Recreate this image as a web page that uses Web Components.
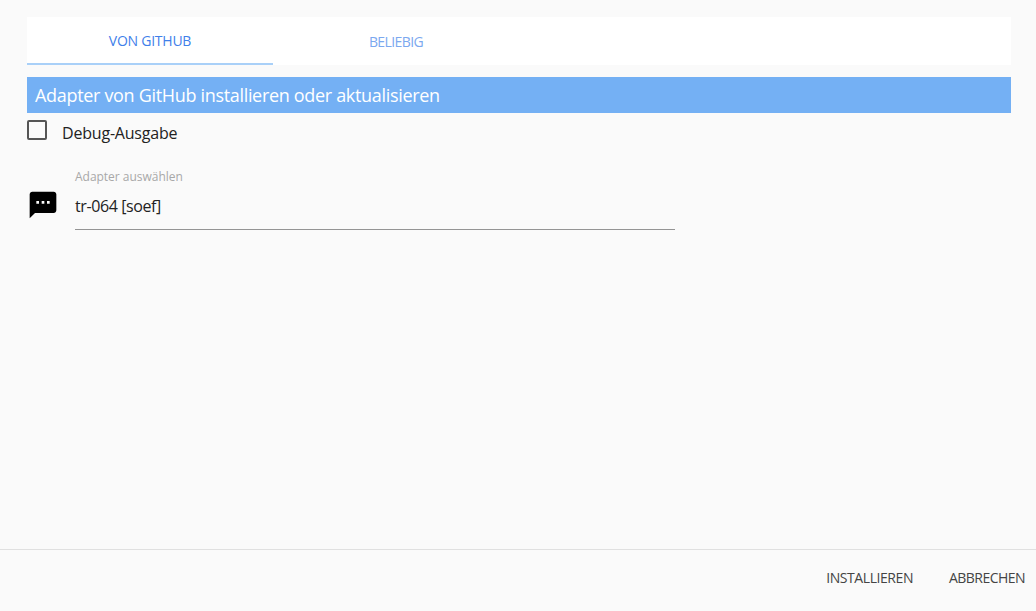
<!DOCTYPE html>
<html><head><meta charset="utf-8"><style>
html,body{margin:0;padding:0;height:100%;background:#fafafa;font-family:"Open Sans","Noto Sans",sans-serif;overflow:hidden}
</style></head><body>
<install-dialog></install-dialog>
<script>
function def(name, html){
  customElements.define(name, class extends HTMLElement{
    constructor(){super();this.attachShadow({mode:'open'}).innerHTML=html;}
  });
}
def('tab-bar',`<style>:host{display:flex;height:48px;background:#fff}
.t{width:246px;box-sizing:border-box;display:flex;align-items:center;justify-content:center;font-size:14px;color:#3f80ea;height:48px}
.a{border-bottom:2px solid #a9d0f8;letter-spacing:-.25px;padding-top:1px}
.b{color:#7ba8ef;letter-spacing:-.6px;padding-bottom:1px;padding-top:1px}</style>
<div class="t a">VON GITHUB</div><div class="t b">BELIEBIG</div>`);
def('section-title',`<style>:host{display:block;height:36px;line-height:37px;margin-top:12px;background:#74b0f4;color:#fff;font-size:18px;letter-spacing:-.32px;padding-left:8px}</style><slot></slot>`);
def('check-row',`<style>:host{display:flex;height:20px;margin-top:7px;align-items:flex-start}
.b{width:20px;height:20px;box-sizing:border-box;border:2px solid #555;border-radius:2px;flex:none}
.l{margin:3px 0 0 15px;font-size:16px;line-height:20px;letter-spacing:-.2px;color:#222}</style>
<div class="b"></div><div class="l"><slot></slot></div>`);
def('adapter-select',`<style>:host{display:flex;margin-top:29px}
svg{width:32px;height:32px;margin:20px 0 0 0;flex:none}
.f{width:600px;margin-left:16px;height:60px;border-bottom:1px solid #949494}
.c{font-size:12px;line-height:16px;letter-spacing:-.02px;color:#a8a8a8}
.v{font-size:16px;line-height:20px;margin-top:11px;letter-spacing:-.4px;color:#222}</style>
<svg viewBox="0 0 24 24"><path d="M20 2H4c-1.100 0-2 .9-2 2v18l4-4h14c1.100 0 2-.9 2-2V4c0-1.100-.9-2-2-2zM9 11H7V9h2v2zm4 0h-2V9h2v2zm4 0h-2V9h2v2z"/></svg>
<div class="f"><div class="c">Adapter auswählen</div><div class="v">tr-064 [soef]</div></div>`);
def('action-bar',`<style>:host{position:absolute;left:0;right:0;top:549px;height:62px;box-sizing:border-box;border-top:1px solid #e0e0e0;display:flex;justify-content:flex-end;align-items:center;gap:36px;padding:0 11px 6px 0;font-size:14px;letter-spacing:-.43px;color:#444}
.n{letter-spacing:-.54px}</style>
<span>INSTALLIEREN</span><span class="n">ABBRECHEN</span>`);
def('install-dialog',`<style>:host{display:block}
.m{padding:17px 25px 0 27px}</style>
<div class="m"><tab-bar></tab-bar>
<section-title>Adapter von GitHub installieren oder aktualisieren</section-title>
<check-row>Debug-Ausgabe</check-row>
<adapter-select></adapter-select></div>
<action-bar></action-bar>`);
</script>
</body></html>
